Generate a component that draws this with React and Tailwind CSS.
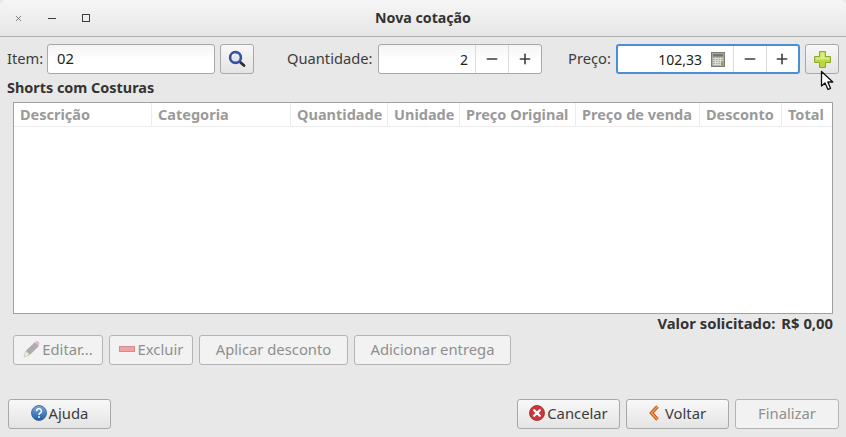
import { Minus, Plus, X } from 'lucide-react'

const columns = [
  ['Descrição', 'w-[138px]'],
  ['Categoria', 'w-[139px]'],
  ['Quantidade', 'w-[97px]'],
  ['Unidade', 'w-[72px]'],
  ['Preço Original', 'w-[116px]'],
  ['Preço de venda', 'w-[124px]'],
  ['Desconto', 'w-[82px]'],
  ['Total', 'flex-1'],
]

function SearchIcon() {
  return (
    <svg width="18" height="18" viewBox="0 0 18 18">
      <path d="M11.5 11.5 L16 15.5" stroke="#2e2e2e" strokeWidth="2.8" strokeLinecap="round" />
      <circle cx="7.5" cy="7.5" r="5.4" fill="#dfe6f4" stroke="#3650a4" strokeWidth="2.6" />
      <path d="M4.5 7 A3 3 0 0 1 7.5 4.2" stroke="#fff" strokeWidth="1.2" fill="none" />
    </svg>
  )
}

function PlusIcon() {
  return (
    <svg width="17" height="17" viewBox="0 0 17 17">
      <path d="M5.5 0.5h6v5h5v6h-5v5h-6v-5h-5v-6h5z" fill="#bcd63f" stroke="#8fa92c" strokeWidth="1" />
      <path d="M6.5 1.5h4v5h5v2h-14v-2h5z" fill="#dcec85" />
    </svg>
  )
}

function CalcIcon() {
  return (
    <svg width="14" height="15" viewBox="0 0 14 15">
      <rect x="0.5" y="0.5" width="13" height="14" fill="#a9ab9f" stroke="#7b7d74" />
      <rect x="2" y="2" width="10" height="2.5" fill="#777971" />
      <path d="M2 6.5h10M2 8.5h10M2 10.5h10M2 12.5h10M4.5 5.5v8M7 5.5v8M9.5 5.5v8" stroke="#e4e5df" strokeWidth="0.8" />
      <rect x="10" y="10" width="2.5" height="3.5" fill="#8aa84a" />
    </svg>
  )
}

function PencilIcon() {
  return (
    <svg width="17" height="18" viewBox="0 0 17 18" className="opacity-80">
      <path d="M1 17 L3 11 L12 2.5 L15.5 6 L6.5 14.8 Z" fill="#9c9c9c" stroke="#868686" strokeWidth="0.6" />
      <path d="M12 2.5 L13.5 1 Q14.8 0.5 16.2 2.2 Q16.8 3.8 15.5 6 Z" fill="#e9a6cb" />
      <path d="M1 17 L3 11 L6.5 14.8 Z" fill="#f0e8c2" />
    </svg>
  )
}

function HelpIcon() {
  return (
    <svg width="16" height="16" viewBox="0 0 16 16">
      <defs>
        <linearGradient id="helpFill" x1="0" y1="0" x2="0" y2="1">
          <stop offset="0" stopColor="#7da8dc" />
          <stop offset="1" stopColor="#1f5ca6" />
        </linearGradient>
      </defs>
      <circle cx="8" cy="8" r="7.5" fill="url(#helpFill)" stroke="#2b5f9e" strokeWidth="0.8" />
      <path d="M5.6 6.2 A2.4 2.3 0 1 1 9 8.2 Q8 8.7 8 10" stroke="#fff" strokeWidth="1.5" fill="none" />
      <circle cx="8" cy="12" r="0.95" fill="#fff" />
    </svg>
  )
}

function CancelIcon() {
  return (
    <svg width="16" height="16" viewBox="0 0 16 16">
      <circle cx="8" cy="8" r="7.5" fill="#c8383c" stroke="#a02427" strokeWidth="0.8" />
      <path d="M5.2 5.2 L10.8 10.8 M10.8 5.2 L5.2 10.8" stroke="#fff" strokeWidth="2.3" strokeLinecap="round" />
    </svg>
  )
}

function BackIcon() {
  return (
    <svg width="11" height="16" viewBox="0 0 11 16">
      <path d="M8.5 1.5 L2.5 8 L8.5 14.5" fill="none" stroke="#c9581c" strokeWidth="3.4" strokeLinejoin="miter" />
      <path d="M8.5 1.5 L2.5 8 L8.5 14.5" fill="none" stroke="#ef9a4c" strokeWidth="1.5" />
    </svg>
  )
}

function Cursor() {
  return (
    <svg width="15" height="21" viewBox="0 0 15 21" className="absolute left-[820px] top-[70px]">
      <path d="M1.5 1.5 L1.5 16 L5 13 L8 19.5 L10.5 18.3 L7.8 12 L12.8 12 Z" fill="#fff" stroke="#111" strokeWidth="1.3" strokeLinejoin="round" />
    </svg>
  )
}

function SpinButtons({ width = 'w-[33px]' }) {
  return (
    <>
      <span className={`flex h-full items-center justify-center border-l border-[#dcdcdc] text-[#3c3c3c] ${width}`}>
        <Minus size={16} strokeWidth={2.4} />
      </span>
      <span className={`flex h-full items-center justify-center border-l border-[#dcdcdc] text-[#3c3c3c] ${width}`}>
        <Plus size={16} strokeWidth={2.4} />
      </span>
    </>
  )
}

function Button({ className = '', disabled, children }) {
  const look = disabled
    ? 'bg-[#f2f2f2] text-[#8f8f8f] border-[#b4b4b4]'
    : 'bg-gradient-to-b from-[#f8f8f8] to-[#e4e4e4] text-[#3c3c3c] border-[#a8a8a8]'
  return (
    <button type="button" className={`flex h-[30px] shrink-0 items-center justify-center rounded-[3px] border text-[14.8px] ${look} ${className}`}>
      {children}
    </button>
  )
}

export default function App() {
  return (
    <div
      className="relative flex h-[437px] w-[846px] flex-col overflow-hidden bg-[#e8e8e8] text-[14.7px] text-[#3c3c3c]"
      style={{ fontFamily: '"Noto Sans", sans-serif' }}
    >
      <div className="relative flex h-[37px] shrink-0 items-center rounded-t-[6px] border-b border-[#aeaeae] bg-gradient-to-b from-[#f6f6f6] to-[#e6e6e6]">
        <div className="flex items-center pl-[14px] text-[#3c3c3c]">
          <X size={9} strokeWidth={1.6} />
          <span className="ml-[25px] h-px w-[8px] bg-[#3c3c3c]" />
          <span className="ml-[26px] h-[8px] w-[8px] border border-[#3c3c3c]" />
        </div>
        <div className="absolute inset-x-0 text-center text-[14.2px] font-bold text-[#333]">Nova cotação</div>
      </div>

      <div className="mt-[7px] flex h-[30px] shrink-0 items-center pl-[7px]">
        <span className="w-[40px] -translate-y-px">Item:</span>
        <div className="flex h-[30px] w-[168px] items-center rounded-[3px] border border-[#a8a8a8] bg-gradient-to-b from-[#f4f4f4] via-white to-white pb-px pl-[9px] text-[#222]">02</div>
        <Button className="ml-[5px] w-[34px]"><SearchIcon /></Button>
        <span className="ml-[33px] w-[91px] -translate-y-px">Quantidade:</span>
        <div className="flex h-[30px] w-[164px] items-center rounded-[3px] border border-[#a8a8a8] bg-gradient-to-b from-[#f4f4f4] via-white to-white text-[14px] text-[#222]">
          <span className="flex-1 pr-[7px] text-right">2</span>
          <SpinButtons />
        </div>
        <span className="ml-[26px] w-[48px] -translate-y-px">Preço:</span>
        <div className="flex h-[30px] w-[184px] items-center rounded-[3px] border-2 border-[#4a90d9] bg-white text-[14px] text-[#222]">
          <span className="flex-1 text-right">102,33</span>
          <span className="ml-[9px] mr-[8px] flex"><CalcIcon /></span>
          <SpinButtons width="w-[32.5px]" />
        </div>
        <Button className="ml-[5px] w-[34px]"><PlusIcon /></Button>
      </div>

      <div className="mt-[4px] h-[20px] shrink-0 pl-[7px] text-[14.4px] font-bold leading-[20px] text-[#333]">Shorts com Costuras</div>

      <div className="mx-[13px] mt-[4px] flex h-[212px] shrink-0 flex-col border border-[#a0a0a0] bg-white">
        <div className="flex h-[24px] shrink-0 border-b border-[#ececec] text-[14.5px] font-bold text-[#9a9a9a]">
          {columns.map(([label, width], index) => (
            <div key={label} className={`flex items-center whitespace-nowrap pl-[6px] ${width} ${index < columns.length - 1 ? 'border-r border-[#ececec]' : ''}`}>
              {label}
            </div>
          ))}
        </div>
      </div>

      <div className="mr-[13px] h-[18px] shrink-0 text-right text-[14.8px] font-bold leading-[18px] text-[#333]">
        Valor solicitado:<span className="ml-[6px]">R$ 0,00</span>
      </div>

      <div className="ml-[13px] mt-[3px] flex gap-[6px]">
        <Button disabled className="w-[90px] gap-[2px] pb-[2px]"><PencilIcon />Editar...</Button>
        <Button disabled className="w-[84px] gap-[3px] pb-[2px]">
          <span className="h-[6px] w-[16px] border border-[#d98a8c] bg-[#eba3a4]" />
          Excluir
        </Button>
        <Button disabled className="w-[149px] pb-[2px]">Aplicar desconto</Button>
        <Button disabled className="w-[157px] pb-[2px]">Adicionar entrega</Button>
      </div>

      <div className="mt-[34px] flex pl-[8px] pr-[7px]">
        <Button className="w-[103px] gap-[2px] pb-[2px]"><HelpIcon />Ajuda</Button>
        <div className="ml-auto flex gap-[6px]">
          <Button className="w-[103px] gap-[2px] pb-[2px]"><CancelIcon />Cancelar</Button>
          <Button className="w-[103px] gap-[5px] pb-[2px]"><BackIcon />Voltar</Button>
          <Button disabled className="w-[104px] pb-[2px]">Finalizar</Button>
        </div>
      </div>

      <Cursor />
    </div>
  )
}
